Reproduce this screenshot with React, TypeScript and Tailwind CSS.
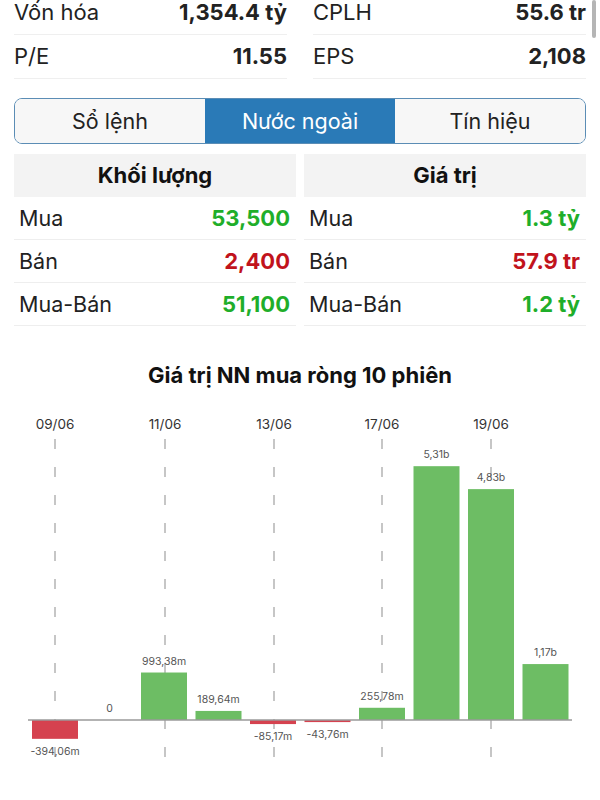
const font = { fontFamily: 'Inter, "Liberation Sans", sans-serif' }

const stats = [
  [
    { label: 'Vốn hóa', value: '1,354.4 tỷ' },
    { label: 'CPLH', value: '55.6 tr' },
  ],
  [
    { label: 'P/E', value: '11.55' },
    { label: 'EPS', value: '2,108' },
  ],
]

const tabs = ['Sổ lệnh', 'Nước ngoài', 'Tín hiệu']

const volume = [
  { label: 'Mua', value: '53,500', up: true },
  { label: 'Bán', value: '2,400', up: false },
  { label: 'Mua-Bán', value: '51,100', up: true },
]

const worth = [
  { label: 'Mua', value: '1.3 tỷ', up: true },
  { label: 'Bán', value: '57.9 tr', up: false },
  { label: 'Mua-Bán', value: '1.2 tỷ', up: true },
]

// values in billions
const sessions = [
  { v: -0.39406, label: '-394,06m' },
  { v: 0, label: '0' },
  { v: 0.99338, label: '993,38m' },
  { v: 0.18964, label: '189,64m' },
  { v: -0.08517, label: '-85,17m' },
  { v: -0.04376, label: '-43,76m' },
  { v: 0.25578, label: '255,78m' },
  { v: 5.31, label: '5,31b' },
  { v: 4.83, label: '4,83b' },
  { v: 1.17, label: '1,17b' },
]

const dates = [
  { x: 55, t: '09/06' },
  { x: 165, t: '11/06' },
  { x: 274, t: '13/06' },
  { x: 382, t: '17/06' },
  { x: 491, t: '19/06' },
]

function Chart() {
  const zero = 720
  const scale = 47.8
  const step = 54.5
  return (
    <svg width="600" height="400" viewBox="0 400 600 400" className="block" style={font}>
      {dates.map((d) => (
        <g key={d.t}>
          <text x={d.x} y={429} textAnchor="middle" fontSize="13.5" fill="#333">
            {d.t}
          </text>
          <line x1={d.x} x2={d.x} y1={439} y2={760} stroke="#a8a8a8" strokeWidth="1.3" strokeDasharray="10 18" />
        </g>
      ))}
      {sessions.map((s, i) => {
        const cx = 55 + i * step
        const h = Math.abs(s.v) * scale
        const pos = s.v >= 0
        const top = pos ? zero - h : zero
        return (
          <g key={i}>
            {h > 0 && <rect x={cx - 23} y={top} width={46} height={Math.max(h, 2)} fill={pos ? '#6dbd64' : '#d5424f'} />}
            <text
              x={cx}
              y={pos ? zero - h - 8 : zero + h + 16}
              textAnchor="middle"
              fontSize="10.5"
              fill="#555"
            >
              {s.label}
            </text>
          </g>
        )
      })}
      <line x1={28} x2={572} y1={zero} y2={zero} stroke="#9a9a9a" strokeWidth="1.5" />
    </svg>
  )
}

function ValueRow({ label, value, up }: { label: string; value: string; up: boolean }) {
  return (
    <div className="flex h-[43px] items-center justify-between border-b border-[#eeeeee] pl-[5px] pr-[6px]">
      <span className="text-[21.5px] text-[#222]">{label}</span>
      <span className={up ? 'text-[22px] font-bold text-[#1fae2a]' : 'text-[22px] font-bold text-[#c1131c]'}>{value}</span>
    </div>
  )
}

export default function App() {
  return (
    <div className="relative h-[800px] w-[600px] overflow-hidden bg-white" style={font}>
      <div className="absolute right-[4px] top-0 h-[38px] w-[4px] rounded-full bg-[#b5b5b5]" />

      <div className="-mt-[9px] grid grid-cols-2 gap-x-[26px] pl-[14px] pr-[14px]">
        {stats.map((row) =>
          row.map((s) => (
            <div key={s.label} className="flex h-[44px] items-center justify-between border-b border-[#efefef]">
              <span className="text-[22px] text-[#222]">{s.label}</span>
              <span className="text-[22px] font-bold text-[#222]">{s.value}</span>
            </div>
          ))
        )}
      </div>

      <div className="mx-[14px] mt-[19px] flex h-[46px] overflow-hidden rounded-[8px] border-[1.5px] border-[#5b8db5]">
        {tabs.map((t, i) => (
          <div
            key={t}
            className={
              i === 1
                ? 'flex flex-1 items-center justify-center bg-[#2a7ab7] text-[21.5px] text-white'
                : 'flex flex-1 items-center justify-center bg-[#f7f7f7] text-[21.5px] text-[#222]'
            }
          >
            {t}
          </div>
        ))}
      </div>

      <div className="mt-[10px] grid grid-cols-2 gap-x-[8px] pl-[14px] pr-[14px]">
        <div>
          <div className="flex h-[43px] items-center justify-center bg-[#f3f3f3] text-[22px] font-bold text-[#111]">Khối lượng</div>
          {volume.map((r) => (
            <ValueRow key={r.label} {...r} />
          ))}
        </div>
        <div>
          <div className="flex h-[43px] items-center justify-center bg-[#f3f3f3] text-[22px] font-bold text-[#111]">Giá trị</div>
          {worth.map((r) => (
            <ValueRow key={r.label} {...r} />
          ))}
        </div>
      </div>

      <div className="h-[74px] pt-[36px] text-center text-[22px] font-bold leading-[26px] text-[#111]">
        Giá trị NN mua ròng 10 phiên
      </div>
      <Chart />
    </div>
  )
}
